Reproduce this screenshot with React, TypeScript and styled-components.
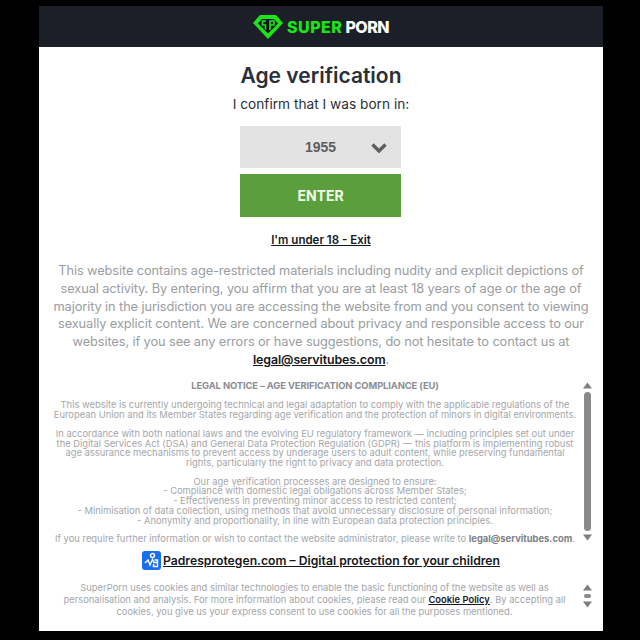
import React from "react"
import styled, { createGlobalStyle } from "styled-components"

const Global = createGlobalStyle`
    html, body {
        margin: 0;
        padding: 0;
        background: #000;
    }
    body {
        font-family: Inter, "Noto Sans", sans-serif;
    }
`

const Page = styled.div`
    width: 640px;
    height: 640px;
    padding: 6px 37px 9px 39px;
    box-sizing: border-box;
    overflow: hidden;
`

const Modal = styled.div`
    height: 100%;
    display: flex;
    flex-direction: column;
    background: #fff;
`

const Header = styled.header`
    height: 41px;
    flex: none;
    display: flex;
    align-items: center;
    justify-content: center;
    gap: 4px;
    background: #1c1f27;
`

const Brand = styled.span`
    font-size: 16px;
    font-weight: 800;
    letter-spacing: ${(props: { $accent?: boolean }) => (props.$accent ? "0.5px" : "-0.5px")};
    color: ${(props: { $accent?: boolean }) => (props.$accent ? "#19e619" : "#fff")};
`

const BrandWords = styled.div`
    display: flex;
    gap: 3px;
`

const Title = styled.h1`
    margin: 14px 0 0;
    font-size: 21px;
    line-height: 30px;
    font-weight: 600;
    color: #2b2f38;
    text-align: center;
`

const Confirm = styled.p`
    margin: 3px 0 0;
    font-size: 13.7px;
    line-height: 20px;
    color: #2b2f38;
    text-align: center;
`

const Form = styled.div`
    width: 161px;
    margin: 12px 0 0 201px;
    display: flex;
    flex-direction: column;
    gap: 6px;
`

const YearSelect = styled.div`
    height: 42px;
    position: relative;
    display: flex;
    align-items: center;
    justify-content: center;
    background: #e3e3e3;
    font-family: "Liberation Sans", Arial, sans-serif;
    font-size: 14px;
    font-weight: 700;
    color: #5e5e5e;
`

const Chevron = styled.svg`
    position: absolute;
    right: 14px;
    top: 17px;
`

const EnterButton = styled.button`
    height: 43px;
    border: 0;
    padding: 0;
    background: #5b9e3c;
    color: #f3fbe9;
    font-family: inherit;
    font-size: 14px;
    font-weight: 700;
`

const ExitLink = styled.a`
    display: block;
    margin-top: 15px;
    font-size: 11.5px;
    line-height: 16px;
    font-weight: 600;
    color: #16181d;
    text-align: center;
    text-decoration: underline;
`

const Intro = styled.p`
    margin: 14px 0 0;
    font-size: 12.8px;
    line-height: 17.8px;
    letter-spacing: -0.1px;
    color: #9a9da1;
    text-align: center;
`

const Mail = styled.a`
    font-size: 12.4px;
    font-weight: 600;
    color: #16181d;
    text-decoration: underline;
`

const ScrollRow = styled.div`
    display: flex;
    align-items: stretch;
    margin-right: 10px;
`

const LegalText = styled.div`
    flex: 1;
    padding-left: 12px;
    font-size: 9.4px;
    line-height: 9.7px;
    color: #a4a6aa;
    text-align: center;
`

const LegalRow = styled(ScrollRow)`
    margin-top: 12px;
    height: 160px;
`

const LegalHeading = styled.div`
    margin-bottom: 10px;
    font-weight: 700;
    letter-spacing: -0.1px;
    color: #8b8d92;
`

const LegalBlock = styled.p`
    margin: 0 0 9px;
`

const Strong = styled.b`
    font-weight: 700;
    color: #7d8086;
`

const Bar = styled.div`
    width: 12px;
    flex: none;
    display: flex;
    flex-direction: column;
    align-items: center;
    gap: 3px;
    margin-left: 2px;
    padding-top: 1px;
    color: #7f7f7f;
`

const Thumb = styled.div`
    flex: 1;
    width: 7px;
    border-radius: 4px;
    background: #8a8a8a;
`

const SmallThumb = styled.div`
    width: 7px;
    height: 4px;
    border-radius: 2px;
    background: #8a8a8a;
`

const Promo = styled.a`
    display: flex;
    align-items: center;
    justify-content: center;
    gap: 2px;
    margin-top: 10px;
    height: 20px;
    font-size: 12.2px;
    font-weight: 600;
    color: #16181d;
    text-decoration: underline;
`

const PromoIcon = styled.svg`
    flex: none;
    border-radius: 3px;
`

const CookieRow = styled(ScrollRow)`
    margin-top: 11px;
    height: 42px;
`

const CookieText = styled.div`
    flex: 1;
    padding-left: 11px;
    font-size: 9.4px;
    line-height: 12px;
    color: #a4a6aa;
    text-align: center;
`

const CookieBar = styled(Bar)`
    justify-content: flex-start;
    padding-top: 2px;
`

const CookieLink = styled.a`
    font-weight: 600;
    color: #16181d;
    text-decoration: underline;
`

const Up = () => (
    <svg width="9" height="7" viewBox="0 0 9 7"><path d="M4.5 0.5L9 6.5H0z" fill="currentColor" /></svg>
)
const Down = () => (
    <svg width="9" height="7" viewBox="0 0 9 7"><path d="M0 0.5H9L4.5 6.5z" fill="currentColor" /></svg>
)

const App: React.FC = (): JSX.Element => {
    return (
        <Page>
            <Global />
            <Modal>
                <Header>
                    <svg width="30" height="24" viewBox="0 0 30 24">
                        <path d="M7 0H23L30 8L15 24L0 8z" fill="#19e619" />
                        <path d="M9 4H21L25 8.5L15 18.5L5 8.5z" fill="#10141a" />
                        <path d="M13 6H9.5V10H12.5V14.5M17 15V6H21V10H17" fill="none" stroke="#19e619" strokeWidth="1.6" />
                    </svg>
                    <BrandWords>
                        <Brand $accent>SUPER</Brand>
                        <Brand>PORN</Brand>
                    </BrandWords>
                </Header>
                <Title>Age verification</Title>
                <Confirm>I confirm that I was born in:</Confirm>
                <Form>
                    <YearSelect>
                        1955
                        <Chevron width="16" height="10" viewBox="0 0 16 10">
                            <path d="M1.5 1.5L8 8L14.5 1.5" fill="none" stroke="#5e5e5e" strokeWidth="3.4" />
                        </Chevron>
                    </YearSelect>
                    <EnterButton>ENTER</EnterButton>
                </Form>
                <ExitLink>I'm under 18 - Exit</ExitLink>
                <Intro>
                    This website contains age-restricted materials including nudity and explicit depictions of<br />
                    sexual activity. By entering, you affirm that you are at least 18 years of age or the age of<br />
                    majority in the jurisdiction you are accessing the website from and you consent to viewing<br />
                    sexually explicit content. We are concerned about privacy and responsible access to our<br />
                    websites, if you see any errors or have suggestions, do not hesitate to contact us at<br />
                    <Mail>legal@servitubes.com</Mail>.
                </Intro>
                <LegalRow>
                    <LegalText>
                        <LegalHeading>LEGAL NOTICE – AGE VERIFICATION COMPLIANCE (EU)</LegalHeading>
                        <LegalBlock>
                            This website is currently undergoing technical and legal adaptation to comply with the applicable regulations of the<br />
                            European Union and its Member States regarding age verification and the protection of minors in digital environments.
                        </LegalBlock>
                        <LegalBlock>
                            In accordance with both national laws and the evolving EU regulatory framework — including principles set out under<br />
                            the Digital Services Act (DSA) and General Data Protection Regulation (GDPR) — this platform is implementing robust<br />
                            age assurance mechanisms to prevent access by underage users to adult content, while preserving fundamental<br />
                            rights, particularly the right to privacy and data protection.
                        </LegalBlock>
                        <LegalBlock>
                            Our age verification processes are designed to ensure:<br />
                            - Compliance with domestic legal obligations across Member States;<br />
                            - Effectiveness in preventing minor access to restricted content;<br />
                            - Minimisation of data collection, using methods that avoid unnecessary disclosure of personal information;<br />
                            - Anonymity and proportionality, in line with European data protection principles.
                        </LegalBlock>
                        <LegalBlock>
                            If you require further information or wish to contact the website administrator, please write to <Strong>legal@servitubes.com</Strong>.
                        </LegalBlock>
                    </LegalText>
                    <Bar>
                        <Up />
                        <Thumb />
                        <Down />
                    </Bar>
                </LegalRow>
                <Promo>
                    <PromoIcon width="19" height="19" viewBox="0 0 19 19">
                        <rect width="19" height="19" fill="#1a6ff0" />
                        <circle cx="10.5" cy="4.5" r="2" fill="none" stroke="#fff" strokeWidth="1.3" />
                        <path d="M3 12L6 9L8 14L10.5 8.5L12 11.5H16M12.5 9H15.5V15.5H11.5V13" fill="none" stroke="#fff" strokeWidth="1.4" />
                    </PromoIcon>
                    Padresprotegen.com – Digital protection for your children
                </Promo>
                <CookieRow>
                    <CookieText>
                        SuperPorn uses cookies and similar technologies to enable the basic functioning of the website as well as<br />
                        personalisation and analysis. For more information about cookies, please read our <CookieLink>Cookie Policy</CookieLink>. By accepting all<br />
                        cookies, you give us your express consent to use cookies for all the purposes mentioned.
                    </CookieText>
                    <CookieBar>
                        <Up />
                        <SmallThumb />
                        <Down />
                    </CookieBar>
                </CookieRow>
            </Modal>
        </Page>
    )
}

export default App
